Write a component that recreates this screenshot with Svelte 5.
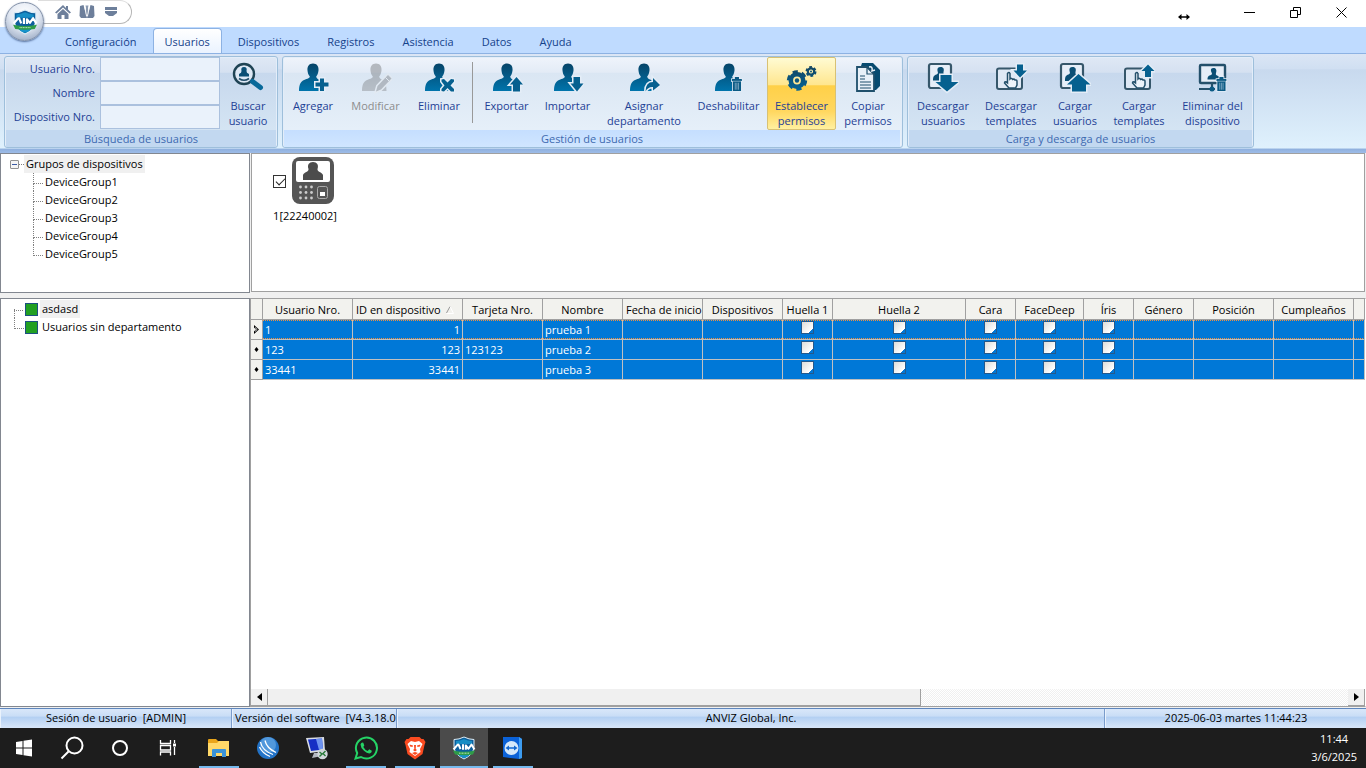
<script>
  const tabs = ['Configuración', 'Usuarios', 'Dispositivos', 'Registros', 'Asistencia', 'Datos', 'Ayuda'];
  const fields = [
    { id: 'f-user', label: 'Usuario Nro.' },
    { id: 'f-name', label: 'Nombre' },
    { id: 'f-device', label: 'Dispositivo Nro.' }
  ];
  const manage = [
    { icon: 'add', lines: ['Agregar'], w: 58 },
    { icon: 'edit', lines: ['Modificar'], w: 67, disabled: true },
    { icon: 'remove', lines: ['Eliminar'], w: 60 },
    { sep: true },
    { icon: 'up', lines: ['Exportar'], w: 61 },
    { icon: 'down', lines: ['Importar'], w: 61 },
    { icon: 'assign', lines: ['Asignar', 'departamento'], w: 92 },
    { icon: 'disable', lines: ['Deshabilitar'], w: 77 },
    { icon: 'gears', lines: ['Establecer', 'permisos'], w: 69, active: true },
    { icon: 'copy', lines: ['Copiar', 'permisos'], w: 64 }
  ];
  const transfer = [
    { icon: 'userDown', lines: ['Descargar', 'usuarios'], w: 68 },
    { icon: 'tplDown', lines: ['Descargar', 'templates'], w: 68 },
    { icon: 'userUp', lines: ['Cargar', 'usuarios'], w: 60 },
    { icon: 'tplUp', lines: ['Cargar', 'templates'], w: 68 },
    { icon: 'deviceTrash', lines: ['Eliminar del', 'dispositivo'], w: 79 }
  ];
  const groups = ['DeviceGroup1', 'DeviceGroup2', 'DeviceGroup3', 'DeviceGroup4', 'DeviceGroup5'];
  const departments = ['asdasd', 'Usuarios sin departamento'];
  const columns = [
    { t: 'Usuario Nro.', w: 90, k: 'user' },
    { t: 'ID en dispositivo', w: 110, k: 'id', sort: true },
    { t: 'Tarjeta Nro.', w: 80, k: 'card' },
    { t: 'Nombre', w: 80, k: 'name' },
    { t: 'Fecha de inicio', w: 80, long: true },
    { t: 'Dispositivos', w: 80 },
    { t: 'Huella 1', w: 50, check: true },
    { t: 'Huella 2', w: 133, check: true },
    { t: 'Cara', w: 50, check: true },
    { t: 'FaceDeep', w: 68, check: true },
    { t: 'Íris', w: 50, check: true },
    { t: 'Género', w: 60 },
    { t: 'Posición', w: 80 },
    { t: 'Cumpleaños', w: 80 }
  ];
  const rows = [
    { user: '1', id: '1', card: '', name: 'prueba 1' },
    { user: '123', id: '123', card: '123123', name: 'prueba 2' },
    { user: '33441', id: '33441', card: '', name: 'prueba 3' }
  ];
  const apps = [
    { k: 'explorer', t: 'Explorador', open: true },
    { k: 'blue', t: 'Navegador' },
    { k: 'remote', t: 'Escritorio remoto' },
    { k: 'whatsapp', t: 'WhatsApp', open: true },
    { k: 'brave', t: 'Brave', open: true },
    { k: 'aim', t: 'AIM', open: true, active: true },
    { k: 'tv', t: 'TeamViewer', open: true }
  ];
</script>

{#snippet shield()}
  <svg viewBox="0 0 24 24" aria-hidden="true">
    <path d="M12 1Q17 3.500 22 3.500V10Q22 18.500 12 23Q2 18.500 2 10V3.500Q7 3.500 12 1Z" fill="#0d5f9c" stroke="#dcecf6" stroke-width="1" />
    <path d="M12 3Q16 5 20 5V8H4V5Q8 5 12 3Z" fill="#168dc5" />
    <path d="M5 17Q12 20 19 17Q17 20.500 12 22Q7 20.500 5 17Z" fill="#1793ca" />
    <path d="M1 14.500Q12 17 23 14.500L21 18.500Q12 20 3 18.500Z" fill="#2f9c48" />
    <path d="M1.500 13.500L5.500 8.800Q6.500 8 7 9.500L8.500 13.200M11 8.200V13.800M13.800 13.800V9.500L16.500 12.800L19.500 8.500L22.500 13.500" fill="none" stroke="#fff" stroke-width="2" stroke-linejoin="round" />
    <path d="M7 17.200H17" stroke="#d6f2d8" stroke-width=".8" stroke-dasharray="1 .5" />
  </svg>
{/snippet}

{#snippet person()}
  <path d="M16 1.500C19.800 1.500 22 4.300 21.500 8.500C21.200 11.500 20.200 13.500 19.200 14.500C19.200 17 23 17.500 24.500 19C26 21 26.500 26 26.500 29H2C2 23 3.500 20 6 18.500C9 17 12.800 16.500 12.800 14.500C11.500 13 10.700 11 10.500 8.500C10 4.300 12.200 1.500 16 1.500Z" />
{/snippet}

{#snippet trash(x, y, s)}
  <g transform="translate({x} {y}) scale({s})">
    <path d="M0 2.500H3.500V0H8.500V2.500H12V5H11V17H1V5H0Z" fill="#0b5a84" stroke="#e4edf7" stroke-width="2" paint-order="stroke" />
    <path d="M1 5.200H11M4 7V15.500M6 7V15.500M8 7V15.500" stroke="#a9c6da" stroke-width=".8" />
  </g>
{/snippet}

{#snippet ribbonIcon(k)}
  <svg class="ico" viewBox="0 0 32 32" fill="url(#ink)" aria-hidden="true">
    {#if ['add', 'edit', 'remove', 'up', 'down', 'assign', 'disable'].includes(k)}
      {@render person()}
    {/if}
    {#if k === 'add'}
      <path class="halo" d="M23 16.500H27V20.500H31.500V24.500H27V29H23V24.500H18.500V20.500H23Z" />
    {:else if k === 'edit'}
      <path class="halo" d="M28 13L31.500 16.500L21 27.500L16 29.500L17.500 24Z" /><path d="M25.500 15.500L29 19" stroke="#e4edf7" />
    {:else if k === 'remove'}
      <path class="halo" d="M18.500 17.500L21 17L24.500 20.500L28 17L31 17.500V19.500L27.500 23.500L31 27V29.500H28L24.500 26L21 29.500L18.500 29V27L21.500 23.500L18.500 19.500Z" />
    {:else if k === 'up'}
      <path class="halo" d="M25.500 15L32 22.500H29V29.500H22V22.500H19Z" />
    {:else if k === 'down'}
      <path class="halo" d="M21.500 15H28V21.500H31.500L25 29.500L18.500 21.500H21.500Z" />
    {:else if k === 'assign'}
      <path class="halo" d="M17.500 29.500Q17.500 20 25 20V16L32 23L25 28.500V25Q20 24.500 17.500 29.500Z" />
    {:else if k === 'disable'}
      {@render trash(19, 15, 0.82)}
    {:else if k === 'gears'}
      <g fill="none" stroke="url(#inkLine)">
        <circle cx="11" cy="18.500" r="6.200" stroke-width="4.600" /><circle cx="11" cy="18.500" r="8.500" stroke-width="3.400" stroke-dasharray="5 3.900" />
        <circle cx="25" cy="9.500" r="3.200" stroke-width="2.200" /><circle cx="25" cy="9.500" r="4.500" stroke-width="2" stroke-dasharray="2.700 2.010" />
      </g>
      <circle cx="11" cy="18.500" r="2.200" fill="#0b567e" /><circle cx="25" cy="9.500" r="1" fill="#0b567e" />
    {:else if k === 'copy'}
      <path d="M10 1H21L28 8V24L24 28H20V10L14 4H9Z" fill="#064a70" />
      <path d="M5 5H15L22 12V29H5Z" fill="#e8f0f8" stroke="#1f4f6c" stroke-width="1.800" />
      <path d="M15 5V12H22M8 14H13M8 17H13M8 20H19M8 23H19M8 26H19" fill="none" stroke="#1f4f6c" stroke-width="1.200" /><path d="M17 5Q21 4 20 9L23 8" fill="none" stroke="#e8f0f8" stroke-width="1.500" />
    {:else if k === 'userDown' || k === 'userUp'}
      <rect x="2" y="2" width="22" height="24" rx="2" fill="#e6eef8" stroke="#36576b" stroke-width="2.200" />
      <path d="M13.500 5C17 5 17.200 7.500 16.500 10C16 12 17 12.500 19.500 13.500L20 19H6C6 14 7 13.500 9.500 12.500C11.500 11.500 11 10.500 10.500 9C10 6.500 11 5 13.500 5Z" fill="#0b4f75" />
      {#if k === 'userDown'}
        <path class="halo" d="M13.500 13H24.500V20H31.500L20 29.500L8.500 20H13.500Z" />
      {:else}
        <path class="halo" d="M19.500 12L31.500 22.500H27V29.500H13V22.500H8Z" />
      {/if}
    {:else if k === 'tplDown' || k === 'tplUp'}
      <rect x="2" y="6.500" width="25" height="20.500" rx="2" fill="#dfe9f5" stroke="#36576b" stroke-width="2" />
      <path d="M12.500 21V11.500Q14 9.500 15 11.500V17Q16.500 15.500 17.500 17.500Q19 16.500 20 18Q22 17.500 22 19.500V23L20.500 26H14L9.500 21Q9.500 18.500 12.500 21Z" fill="#edf3fa" stroke="#24506b" stroke-width="1.500" />
      {#if k === 'tplDown'}
        <path class="halo" d="M22 2.500H28V8.500H32L25 15.500L18.500 8.500H22Z" />
      {:else}
        <path class="halo" d="M25 2.500L31.500 9H28V15H22V9H18.500Z" />
      {/if}
    {:else if k === 'deviceTrash'}
      <rect x="3" y="3" width="25" height="18" rx="1" fill="#e6eef8" stroke="#24506b" stroke-width="2.400" />
      <path d="M16.500 6C19 6 20 8 19 11C18.500 13 19 13 22 14.500V17.500H10.500C10.500 14 12 13.500 14 13C16 12 14.500 11 14 9C13.500 7 14.500 6 16.500 6Z" fill="#0b4f75" />
      <path d="M15 20V27M2 27H18" stroke="#24506b" stroke-width="2.200" /><circle cx="15" cy="27" r="2.500" fill="#0b5a84" />
      {@render trash(19.5, 15, 0.82)}
    {:else if k === 'search'}
      <circle cx="12" cy="12" r="10" fill="#dde8f5" stroke="#1f4354" stroke-width="2.400" />
      <path d="M12 5Q15.500 5 14.500 9Q14.200 11 17 12V14.500H7V12Q9.800 11 9.500 9Q8.500 5 12 5Z" fill="#0b4f75" /><path d="M7 16.500Q12 20 17 16.500" fill="none" stroke="#24506b" stroke-width="1.600" />
      <path d="M20.500 19.500L28.500 25.500" stroke="#08699a" stroke-width="5" stroke-linecap="round" />
    {/if}
  </svg>
{/snippet}

{#snippet ribbonButton(b)}
  <button class="rb" class:active={b.active} disabled={b.disabled} style:width="{b.w}px">
    {@render ribbonIcon(b.icon)}
    {#each b.lines as l}<span>{l}</span>{/each}
  </button>
{/snippet}

{#snippet appIcon(k)}
  {#if k === 'aim'}
    {@render shield()}
  {:else}
    <svg viewBox="0 0 24 24" aria-hidden="true">
      {#if k === 'explorer'}
        <path d="M1 4Q1 3 2 3H9L11 5H21Q22 5 22 6V20H1Z" fill="#e9a51a" /><path d="M1 7H10L12 5H22V20H1Z" fill="#ffd868" /><path d="M5 21V14Q5 13 6 13H18Q19 13 19 14V21H15V17H9V21Z" fill="#3b93d8" />
      {:else if k === 'blue'}
        <circle cx="12" cy="12" r="11" fill="#2373c7" /><circle cx="12" cy="9" r="8" fill="#6fb0ea" opacity=".6" />
        <path d="M4.500 6Q6 14.500 17 18.500M9 4.500Q10.500 12 20 16.500M3.500 11Q6.500 17.500 14 20.500" fill="none" stroke="#fff" stroke-width="1.300" />
      {:else if k === 'remote'}
        <path d="M1 2L19 1L20 15L5 17Z" fill="#d9dde3" /><path d="M3 3.500L17 2.500L18 13.500L6 15Z" fill="#152fc4" /><path d="M11 3L17 2.500L18 13.500L14 14Z" fill="#6d93f0" /><path d="M9 17H14L17 20L7 22Z" fill="#b5bac2" />
        <circle cx="17.500" cy="18" r="5.200" fill="#d3d8dc" /><path d="M14.500 16L17 18L14.500 20.500M20.500 15L18 17.500L20.500 20" fill="none" stroke="#287a39" stroke-width="1.400" />
      {:else if k === 'whatsapp'}
        <path d="M1.500 22.500L3.200 17A10.500 10.500 0 1 1 7 21Z" fill="none" stroke="#25d366" stroke-width="2" />
        <path d="M8.500 6.500Q7 6.500 6.500 8.500Q6.500 11.500 10 14.800Q13.500 18 16.200 17.300Q18 16.500 17.800 14.800L15.200 13.300L13.700 15Q11 14 9.300 11L10.300 9.500L9.300 6.800Z" fill="#25d366" />
      {:else if k === 'brave'}
        <path d="M7.500 1H16.500L18.500 3H20.500L22.500 6L21.500 9L19.500 18L12 23.500L4.500 18L2.500 9L1.500 6L3.500 3H5.500Z" fill="#fb4b20" />
        <path d="M8 5L12 6L16 5L19.500 8L17 13L17.500 16L12 20L6.500 16L7 13L4.500 8Z" fill="#fff" /><path d="M6.500 8.500L10 9.500L9.500 11L7 10.500ZM17.500 8.500L14 9.500L14.500 11L17 10.500ZM11 9H13L12.700 13L14 14L12 15.500L10 14L11.300 13ZM9 17L12 16L15 17L12 19Z" fill="#fb4b20" />
      {:else if k === 'tv'}
        <path d="M2 1H18L21 3V22L18 23L2 21Z" fill="#0b62d8" /><path d="M18 1L21 3V22L18 23Z" fill="#3d9cf0" /><circle cx="10.500" cy="12" r="7" fill="#d5e8fa" /><path d="M4.500 12L8 9.500V11.300H13V9.500L16.500 12L13 14.500V12.700H8V14.500Z" fill="#1267cf" />
      {/if}
    </svg>
  {/if}
{/snippet}

<svg class="defs" aria-hidden="true">
  <defs>
    <linearGradient id="ink" x1="0" y1="0" x2="0" y2="1"><stop offset="0" stop-color="#064468" /><stop offset="1" stop-color="#0074ac" /></linearGradient>
    <linearGradient id="inkLine" gradientUnits="userSpaceOnUse" x1="0" y1="4" x2="0" y2="30"><stop offset="0" stop-color="#12445f" /><stop offset="1" stop-color="#04679a" /></linearGradient>
  </defs>
</svg>

<div class="window">
  <header class="title">
    <button class="orb" aria-label="Menú de la aplicación">{@render shield()}</button>
    <div class="quick">
      <button aria-label="Inicio"><svg viewBox="0 0 16 16"><path d="M0 8.500L8 1L11 4V2H13V5.500L16 8.500L14.500 9.500L8 3.500L1.500 9.500ZM2.500 10L8 5L13.500 10V15H9.500V11H6.500V15H2.500Z" fill="#6d7f9b" /></svg></button>
      <button aria-label="Personal"><svg viewBox="0 0 16 16"><path d="M1 2L4.500 1L8 14H2L.5 12ZM15 2L11.500 1L8 14H14L15.500 12Z" fill="#6d7f9b" /><path d="M6.500 1.500H9.500L9 4L9.500 9L8 12L6.500 9L7 4Z" fill="#8b9ab1" /><path d="M5.500 2L7.500 12M10.500 2L8.500 12" stroke="#fff" stroke-width=".8" /></svg></button>
      <button aria-label="Más"><svg viewBox="0 0 16 16"><path d="M2 3H14V6H2ZM2 7H14V9L10 12H6L2 9Z" fill="#6d7f9b" /></svg></button>
    </div>
    <svg class="resize" viewBox="0 0 12 8" aria-hidden="true"><path d="M0 4L3.500 1V3.200H8.500V1L12 4L8.500 7V4.800H3.500V7Z" /></svg>
    <div class="controls">
      <button aria-label="Minimizar"><svg viewBox="0 0 11 11"><path d="M0 5.500H11" /></svg></button>
      <button aria-label="Restaurar"><svg viewBox="0 0 11 11"><path d="M.5 3.500H7.500V10.500H.5ZM3.500 3.500V.5H10.500V7.500H7.500" /></svg></button>
      <button aria-label="Cerrar"><svg viewBox="0 0 11 11"><path d="M.5 .5L10.500 10.500M10.500 .5L.5 10.500" /></svg></button>
    </div>
  </header>

  <nav class="tabs">
    {#each tabs as t}<button class:on={t === 'Usuarios'}>{t}</button>{/each}
  </nav>

  <section class="ribbon">
    <div class="group">
      <div class="body">
        <div class="fields">
          {#each fields as f}
            <div class="field"><label for={f.id}>{f.label}</label><input id={f.id} type="text" /></div>
          {/each}
        </div>
        {@render ribbonButton({ icon: 'search', lines: ['Buscar', 'usuario'], w: 56 })}
      </div>
      <div class="caption">Búsqueda de usuarios</div>
    </div>
    <div class="group light">
      <div class="body">
        {#each manage as b}
          {#if b.sep}<i class="sep"></i>{:else}{@render ribbonButton(b)}{/if}
        {/each}
      </div>
      <div class="caption">Gestión de usuarios</div>
    </div>
    <div class="group">
      <div class="body">
        {#each transfer as b}{@render ribbonButton(b)}{/each}
      </div>
      <div class="caption">Carga y descarga de usuarios</div>
    </div>
  </section>

  <main>
    <section class="pane tree">
      <div class="root"><button class="toggle" aria-label="Contraer"></button><i class="stub"></i><span class="sel">Grupos de dispositivos</span></div>
      <ul class="kids">
        {#each groups as g}<li>{g}</li>{/each}
      </ul>
    </section>
    <section class="pane devices">
      <div class="device">
        <div class="pic">
          <input id="dev1" type="checkbox" checked />
          <svg viewBox="0 0 42 48" aria-hidden="true">
            <rect width="42" height="47" rx="8" fill="#555" /><rect x="4" y="4" width="34" height="21" rx="2" fill="#fff" />
            <path d="M21 5C25 5 27 8 25.500 12C25 15 30 15 31 18V23H11V18C12 15 17 15 16.500 12C15 8 17 5 21 5Z" fill="#4c4c4c" />
            <g fill="#ccc">
              {#each [30, 35.5, 41] as y}{#each [8.5, 14, 19.5] as x}<circle cx={x} cy={y} r="1.400" />{/each}{/each}
            </g>
            <rect x="25.500" y="29.500" width="10" height="12" rx="2" fill="none" stroke="#aaa" /><rect x="28" y="35" width="5" height="4" fill="#fff" />
          </svg>
        </div>
        <label for="dev1">1[22240002]</label>
      </div>
    </section>
    <section class="pane tree depts">
      <ul>
        {#each departments as d, i}<li><i class="sq"></i><span class:sel={i === 0}>{d}</span></li>{/each}
      </ul>
    </section>
    <section class="grid">
      <table>
        <colgroup><col class="c0" />{#each columns as c}<col style:width="{c.w}px" />{/each}<col /></colgroup>
        <thead>
          <tr>
            <th></th>
            {#each columns as c}
              <th class:long={c.long || c.sort}>{c.t}{#if c.sort}<svg class="sort" viewBox="0 0 8 8" aria-hidden="true"><path d="M.5 7L4 .5" stroke="#999" fill="none" /><path d="M4 .5L7.500 7.500H.5" stroke="#fff" fill="none" /></svg>{/if}</th>
            {/each}
            <th></th>
          </tr>
        </thead>
        <tbody>
          {#each rows as r, i}
            <tr class:focus={i === 0}>
              <td class="ind">
                {#if i === 0}<svg viewBox="0 0 7 9"><path d="M1 0L6 4.500L1 9V6.500L3 4.500L1 2.500Z" fill="#000" /><path d="M2 2.500L4.200 4.500L2 6.500" fill="none" stroke="#fff" stroke-width=".8" /></svg>{:else}<svg viewBox="0 0 7 9"><path d="M3.500 2L5.500 4.500L3.500 7L1.500 4.500Z" /></svg>{/if}
              </td>
              {#each columns as c}
                <td class:num={c.k === 'id'} class:chk={c.check}>{#if c.check}<input type="checkbox" aria-label={c.t} />{:else}{c.k ? r[c.k] : ''}{/if}</td>
              {/each}
              <td></td>
            </tr>
          {/each}
        </tbody>
      </table>
      <div class="hscroll">
        <button aria-label="Izquierda"><svg viewBox="0 0 5 8"><path d="M5 0V8L0 4Z" /></svg></button>
        <div class="track"><div class="thumb"></div></div>
        <button aria-label="Derecha"><svg viewBox="0 0 5 8"><path d="M0 0V8L5 4Z" /></svg></button>
      </div>
    </section>
  </main>

  <footer class="status">
    <div>Sesión de usuario&nbsp; [ADMIN]</div>
    <div class="ver">Versión del software&nbsp; [V4.3.18.0</div>
    <div>ANVIZ Global, Inc.</div>
    <div>2025-06-03 martes 11:44:23</div>
  </footer>

  <div class="taskbar">
    <div class="sys">
      <button aria-label="Inicio"><svg viewBox="0 0 24 24"><path d="M4 6L10.500 5V11.500H4ZM11.500 4.800L20 3.500V11.500H11.500ZM4 12.500H10.500V19L4 18ZM11.500 12.500H20V20.500L11.500 19.200Z" fill="#fff" /></svg></button>
      <button aria-label="Buscar"><svg viewBox="0 0 24 24" fill="none" stroke="#fff" stroke-width="2"><circle cx="14.500" cy="9.500" r="8" /><path d="M8.500 15.500L1.500 22.500" /></svg></button>
      <button aria-label="Cortana"><svg viewBox="0 0 24 24" fill="none" stroke="#fff" stroke-width="2"><circle cx="12" cy="12" r="7" /></svg></button>
      <button aria-label="Vista de tareas"><svg viewBox="0 0 24 24" fill="none" stroke="#fff" stroke-width="1.300"><path d="M4.500 4V7.500H14.500V4M4.500 19.500V16H14.500V19.500M4.500 9.500H14.500V14H4.500ZM18.500 4V7M18.500 11V19" /><path d="M17 9H20" stroke-width="3" /></svg></button>
    </div>
    <div class="apps">
      {#each apps as a}<button class:open={a.open} class:active={a.active} aria-label={a.t}>{@render appIcon(a.k)}</button>{/each}
    </div>
    <div class="clock"><span>11:44</span><span>3/6/2025</span></div>
  </div>
</div>

<style>
  :global(body) { margin: 0; background: #f0f0f0; }
  * { box-sizing: border-box; }
  button { font: inherit; color: inherit; border: 0; background: none; padding: 0; margin: 0; }
  ul { list-style: none; margin: 0; padding: 0; }
  .defs { position: absolute; width: 0; height: 0; }
  .window { display: flex; flex-direction: column; min-height: 100vh; font: 11px/18px "Open Sans", "Noto Sans", sans-serif; color: #000; }

  .title { position: relative; height: 27px; background: #fff; display: flex; align-items: flex-start; }
  .orb { position: absolute; z-index: 2; left: 5px; top: 2px; width: 39px; height: 39px; border-radius: 50%; border: 1px solid #8391a8; background: radial-gradient(circle at 50% 30%, #fff 0, #e4eaf4 45%, #a8b6cd 80%, #e8eef8 100%); display: flex; align-items: center; justify-content: center; box-shadow: 0 1px 2px #56709c; }
  .orb svg { width: 26px; height: 26px; }
  .quick { margin-left: 38px; width: 94px; height: 24px; border: 1px solid #b5b5b5; border-top-color: #ddd; border-left: 0; border-radius: 0 12px 12px 0; display: flex; align-items: center; gap: 8px; padding-left: 17px; }
  .quick button { width: 16px; height: 16px; }
  .quick svg { display: block; width: 16px; height: 16px; }
  .resize { margin: 13px 36px 0 auto; width: 12px; height: 8px; }
  .controls { display: flex; margin-right: 2px; }
  .controls button { width: 46px; height: 25px; display: flex; align-items: center; justify-content: center; }
  .controls svg { width: 11px; height: 11px; fill: none; stroke: #000; }

  .tabs { height: 26px; background: #bfdbff; display: flex; padding-left: 51px; align-items: flex-end; color: #15428b; }
  .tabs button { height: 25px; padding: 0 13px; border-radius: 4px 4px 0 0; border: 1px solid transparent; border-bottom: 0; line-height: 26px; }
  .tabs .on { margin: 0 2px; padding: 0 11px; background: linear-gradient(#fff, #eaf3ff); border-color: #8db2e3; }

  .ribbon { display: flex; gap: 4px; height: 100px; padding: 2px 4px 5px; background: linear-gradient(#dbe6f5 0, #d0dff2 15%, #c8d9ee 16%, #dff1fd 95%, #8fb0de 96%, #9dbce8 100%); border-top: 1px solid #8db2e3; }
  .group { display: flex; flex-direction: column; border: 1px solid #9ebfdb; border-radius: 3px; background: linear-gradient(#dfe8f5 0, #d5e1f1 17%, #c7d8ed 18%, #d8e8f5 100%); box-shadow: inset 0 0 0 1px #e3edf9; color: #1e3f95; padding: 0 1px; }
  .group.light { background: linear-gradient(#eff4fb 0, #e3ebf6 17%, #dae6f3 18%, #e9f2fb 100%); padding-right: 2px; }
  .body { flex: 1; display: flex; }
  .caption { height: 18px; text-align: center; line-height: 17px; background: #c2d8f0; color: #3e6ab0; }
  .light .caption { background: linear-gradient(#c5deff, #d0e6ff); }
  .rb { height: 73px; display: flex; flex-direction: column; align-items: center; padding-top: 4px; line-height: 15px; border: 1px solid transparent; border-radius: 2px; }
  .rb:disabled { color: #8d8d8d; }
  .rb:disabled .ico { filter: grayscale(1); opacity: .3; }
  .rb.active { border-color: #d8c174; background: linear-gradient(#fffbd3 0, #ffe68e 38%, #ffd048 39%, #ffd75f 75%, #fff0a0 100%); }
  .ico { width: 32px; height: 32px; margin-bottom: 4px; flex: none; }
  .halo { fill: #06608f; stroke: #e4edf7; stroke-width: 3px; paint-order: stroke; }
  .sep { width: 1px; height: 61px; margin: 5px 3px 0; background: #999; }
  .fields { display: flex; flex-direction: column; width: 214px; }
  .field { height: 24px; display: flex; align-items: center; justify-content: flex-end; gap: 5px; }
  .field input { width: 120px; height: 24px; border: 1px solid #abc1de; background: #eaf2fb; padding: 0 3px; font: inherit; border-radius: 0; outline: 0; }

  main { flex: 1; display: grid; grid-template-columns: 250px minmax(0, 1fr); grid-template-rows: 140px 1fr; gap: 5px 0; background: #f0f0f0; padding-bottom: 1px; }
  .pane { background: #fff; border: 1px solid #828790; }
  .devices { margin: 0 1px 1px 1px; border-color: #a0a0a0; }
  .tree { line-height: 18px; padding-top: 1px; }
  .root { display: flex; align-items: center; padding-left: 9px; }
  .toggle { width: 9px; height: 9px; border: 1px solid #919191; border-radius: 1px; background: linear-gradient(#3b5ba5, #3b5ba5) center / 5px 1px no-repeat, #f5f5f5; }
  .stub { width: 5px; border-top: 1px dotted #808080; }
  .sel { background: #f0f0f0; padding: 0 2px; }
  .kids { margin-left: 32px; }
  .kids li { position: relative; padding-left: 12px; }
  .kids li::before, .depts li::before { content: ""; position: absolute; left: 0; top: 0; width: 9px; height: 10px; border-left: 1px dotted #808080; border-bottom: 1px dotted #808080; }
  .kids li::after { content: ""; position: absolute; left: 0; top: 10px; bottom: 0; border-left: 1px dotted #808080; }
  .kids li:last-child::after { display: none; }
  .depts ul { padding-left: 13px; }
  .depts li { position: relative; display: flex; align-items: center; padding-left: 11px; gap: 2px; height: 18px; }
  .depts li:first-child::before { border-left: 0; }
  .depts li:first-child::after { content: ""; position: absolute; left: 0; top: 9px; bottom: 0; border-left: 1px dotted #808080; }
  .depts li span { padding: 0 2px; }
  .sq { width: 13px; height: 13px; background: #22a022; border: 1px solid #1c5180; }
  .device { width: 106px; display: flex; flex-direction: column; align-items: center; padding-top: 3px; }
  .pic { display: flex; align-items: center; gap: 6px; padding-right: 4px; }
  .pic svg { width: 42px; height: 48px; }
  .pic input { appearance: none; margin: 0; width: 13px; height: 13px; border: 1px solid #333; background: #fff; display: grid; }
  .pic input:checked::after { content: ""; width: 8px; height: 4px; margin: 2px; border-left: 1px solid #222; border-bottom: 1px solid #222; transform: rotate(-45deg); }
  .device label { line-height: 18px; margin-top: 2px; }

  .grid { background: #fff; border: 1px solid #a0a0a0; border-right-color: #fff; display: flex; flex-direction: column; min-width: 0; }
  table { width: 100%; table-layout: fixed; border-spacing: 0; }
  .c0 { width: 12px; }
  th { height: 21px; padding: 2px 2px 0; font-weight: 400; background: #f2f2ee; border-right: 1px solid #a0a0a0; border-bottom: 1px solid #a0a0a0; line-height: 18px; white-space: nowrap; overflow: hidden; text-align: center; }
  th.long { text-align: left; padding: 2px 3px 0; }
  .sort { width: 8px; height: 8px; margin-left: 5px; }
  td { height: 20px; padding: 0 2px; background: #0078d7; color: #fff; border-right: 1px solid #c0c0c0; border-bottom: 1px solid #c0c0c0; line-height: 18px; white-space: nowrap; overflow: hidden; }
  .focus td { background: linear-gradient(90deg, #f09040 50%, #0078d7 50%) 0 0 / 2px 1px repeat-x, linear-gradient(90deg, #f09040 50%, #0078d7 50%) 0 18px / 2px 1px repeat-x, #0078d7; }
  td.ind, .focus td.ind { background: #f2f2ee; padding: 0 2px; border-color: #a0a0a0; }
  .ind svg { display: block; width: 7px; height: 9px; }
  td.num { text-align: right; }
  td.chk { text-align: center; vertical-align: top; padding: 1px 0 0; line-height: 0; }
  .chk input { appearance: none; width: 13px; height: 13px; margin: 0; border: 1px solid #24598c; background: linear-gradient(135deg, #dcdcd8 0, #fff 78%, #0078d7 79%); }
  .hscroll { margin-top: auto; display: flex; height: 17px; }
  .hscroll button { width: 17px; background: #f0f0f0; border-right: 1px solid #a0a0a0; border-bottom: 1px solid #a0a0a0; display: flex; align-items: center; justify-content: center; }
  .hscroll svg { width: 5px; height: 8px; }
  .track { flex: 1; background: repeating-conic-gradient(#fff 0 25%, #f0f0f0 0 50%) 0 0 / 2px 2px; }
  .thumb { width: 60.5%; height: 100%; background: #f0f0f0; border-right: 1px solid #a0a0a0; border-bottom: 1px solid #a0a0a0; }

  .status { height: 20px; display: grid; grid-template-columns: 232px 165px minmax(0, 1fr) 261px; background: linear-gradient(#d9e7f9 0, #c9ddf6 38%, #b2cff2 42%, #d8e6f9 100%); border-top: 1px solid #5e86bd; line-height: 18px; text-align: center; }
  .status div { overflow: hidden; white-space: nowrap; border-right: 1px solid #7a9ccb; border-left: 1px solid #eaf2fc; }
  .status div:last-child { border-right: 0; }
  .status .ver { text-align: left; padding: 0 2px; }

  .taskbar { height: 40px; background: #1d1d1d; display: flex; color: #fff; }
  .sys, .apps { display: flex; }
  .apps { gap: 1px; margin-left: 3px; }
  .taskbar button { width: 48px; height: 40px; display: flex; align-items: center; justify-content: center; position: relative; }
  .taskbar svg { width: 24px; height: 24px; }
  .open::after { content: ""; position: absolute; left: 4px; right: 4px; bottom: 0; height: 2px; background: #76b9ed; }
  .apps .active { background: #4b4b4b; }
  .active.open::after { left: 0; right: 0; }
  .clock { margin-left: auto; margin-right: 9px; display: flex; flex-direction: column; align-items: center; line-height: 18px; padding-top: 2px; }
</style>
